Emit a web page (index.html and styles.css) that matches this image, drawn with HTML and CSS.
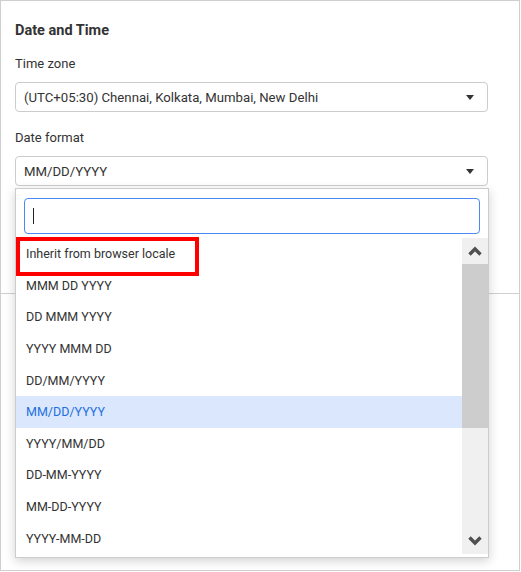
FILE: index.html
```html
<!DOCTYPE html>
<html>
<head>
<meta charset="utf-8">
<link rel="stylesheet" href="styles.css">
</head>
<body>
<div class="panel">
  <div class="section">
    <h2 class="title">Date and Time</h2>
    <div class="field">
      <div class="label">Time zone</div>
      <div class="select"><span>(UTC+05:30) Chennai, Kolkata, Mumbai, New Delhi</span><span class="caret"></span></div>
    </div>
    <div class="field">
      <div class="label">Date format</div>
      <div class="select"><span>MM/DD/YYYY</span><span class="caret"></span></div>
    </div>
  </div>

  <div class="dropdown">
    <div class="search-wrap">
      <div class="search"><span class="cursor"></span></div>
    </div>
    <div class="list-wrap">
      <ul class="list">
        <li class="item">Inherit from browser locale</li>
        <li class="item">MMM DD YYYY</li>
        <li class="item">DD MMM YYYY</li>
        <li class="item">YYYY MMM DD</li>
        <li class="item">DD/MM/YYYY</li>
        <li class="item selected">MM/DD/YYYY</li>
        <li class="item">YYYY/MM/DD</li>
        <li class="item">DD-MM-YYYY</li>
        <li class="item">MM-DD-YYYY</li>
        <li class="item">YYYY-MM-DD</li>
      </ul>
      <div class="scrollbar">
        <div class="sb-btn">
          <svg width="14" height="10" viewBox="0 0 14 10"><polyline points="1.5,8.5 7,3 12.5,8.5" fill="none" stroke="#505050" stroke-width="3.4"/></svg>
        </div>
        <div class="sb-track">
          <div class="sb-thumb"></div>
        </div>
        <div class="sb-btn">
          <svg width="14" height="10" viewBox="0 0 14 10"><polyline points="1.5,1.5 7,7 12.5,1.5" fill="none" stroke="#505050" stroke-width="3.4"/></svg>
        </div>
      </div>
    </div>
  </div>

  <div class="highlight-box"></div>
</div>
</body>
</html>
```

FILE: styles.css
```css
* { box-sizing: border-box; }

body {
  margin: 0;
  font-family: Roboto, "Liberation Sans", Arial, sans-serif;
  color: #333;
  background: #fff;
}

.panel {
  position: relative;
  width: 520px;
  height: 571px;
  border: 1px solid #cfcfcf;
  background: #fff;
}

.section {
  padding: 20px 31px 107px 14px;
  border-bottom: 1px solid #cfcfcf;
}

.title {
  margin: 0;
  font-size: 14.5px;
  font-weight: 700;
  line-height: 20px;
  color: #333;
}

.field { margin-top: 14px; }
.field + .field { margin-top: 17px; }

.label {
  font-size: 13px;
  line-height: 18px;
  color: #333;
}

.select {
  margin-top: 9px;
  height: 30px;
  border: 1px solid #cccccc;
  border-radius: 4px;
  display: flex;
  align-items: center;
  justify-content: space-between;
  padding: 0 13px 0 8px;
  font-size: 13.2px;
  color: #333;
}

.caret {
  width: 0;
  height: 0;
  border-left: 4px solid transparent;
  border-right: 4px solid transparent;
  border-top: 5px solid #333;
}

.dropdown {
  position: absolute;
  left: 14px;
  top: 187px;
  width: 474px;
  height: 370px;
  border: 1px solid #cccccc;
  background: #fff;
  box-shadow: 0 3px 10px rgba(0, 0, 0, 0.18);
  display: flex;
  flex-direction: column;
}

.search-wrap {
  padding: 9px 8px 4px 8px;
}

.search {
  height: 36px;
  border: 1px solid #4a8af4;
  border-radius: 4px;
  display: flex;
  align-items: center;
  padding-left: 8px;
}

.cursor {
  width: 1px;
  height: 16px;
  background: #222;
}

.list-wrap {
  display: flex;
  height: 316px;
}

.list {
  flex: 1;
  margin: 0;
  padding: 0;
  list-style: none;
}

.item {
  height: 31.6px;
  display: flex;
  align-items: center;
  padding-left: 10px;
  font-size: 12.5px;
  color: #333;
}

.item.selected {
  background: #dae7fc;
  color: #1f6fe0;
}

.scrollbar {
  width: 26px;
  background: #f0f0f0;
  display: flex;
  flex-direction: column;
}

.sb-btn {
  height: 26px;
  display: flex;
  align-items: center;
  justify-content: center;
}

.sb-track {
  flex: 1;
}

.sb-thumb {
  height: 164px;
  background: #cdcdcd;
}

.highlight-box {
  position: absolute;
  left: 15px;
  top: 236px;
  width: 183px;
  height: 39px;
  border: 4px solid #ff0000;
}
```
